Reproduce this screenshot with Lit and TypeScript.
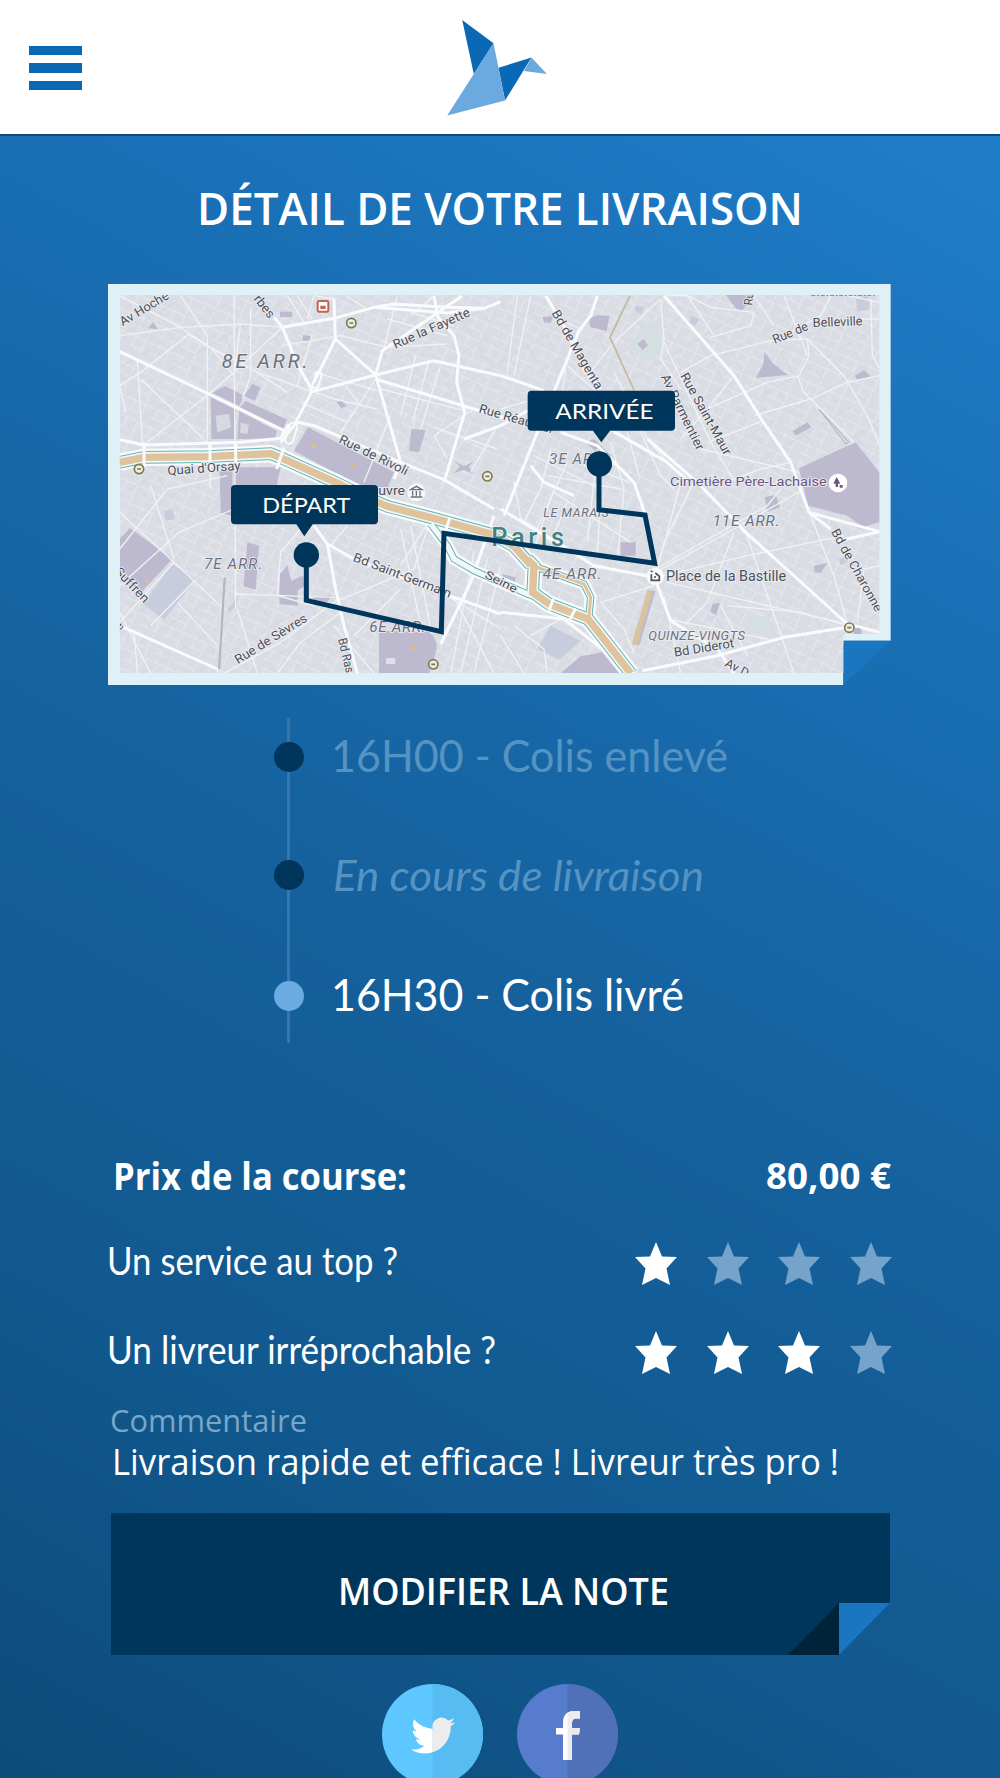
import { html, svg, css, LitElement } from 'lit';
import { customElement, property } from 'lit/decorators.js';

type Label = [text: string, x: number, y: number, angle: number, length: number, size: number, kind?: string];

// Map coordinates are in thirds of a pixel
const PARKS = [
  'M335 352L372 330L430 360L416 390Z',
  'M330 365L405 402L400 490H332Z',
  'M415 405L528 465L524 488L410 490Z',
  'M435 376L560 432L545 462L418 394Z',
  'M622 455L880 590L862 634H782L580 525Z',
  'M455 325L480 335L462 376L430 360Z',
  'M932 460L975 464L955 530L925 525Z',
  'M1058 555L1090 572L1118 558L1104 574L1118 595L1090 582L1060 592L1078 572Z',
  'M400 575H540L528 632H400Z',
  'M357 585H395V722L360 712Z',
  'M57 790L88 757L215 850L122 950L57 895Z',
  'M835 1065L985 1070Q1010 1085 1008 1120L985 1193H835Z',
  'M538 895L560 870L572 915L605 900L620 925L590 945L592 990L536 985Z',
  'M440 800L475 810L465 942L428 932Z',
  'M637 962L694 960L680 978H640Z',
  'M1466 130L1490 118L1526 122L1518 166L1468 154Z',
  'M1326 124L1358 122L1350 142L1330 140Z',
  'M1875 58H1955L1925 106L1905 98Z',
  'M2095 578L2265 500L2337 592V738L2288 755L2240 720L2122 690L2110 640Z',
  'M1992 228L2015 262L2062 298L1966 306L1988 265Z',
  'M2262 300L2290 284L2310 302L2270 312Z',
  'M2076 466L2120 440L2132 455L2085 480Z',
  'M1610 205L1628 190L1642 208L1626 224Z',
  'M1455 500L1480 490L1532 540L1520 560Z',
  'M1560 800H1605V840H1560Z',
  'M1992 665L2025 658L2038 695L2000 708Z',
  'M2140 870L2180 862L2160 892L2142 890Z',
  'M1504 1130L1556 1193H1380L1440 1142Z',
  'M1205 895L1245 905L1240 935L1205 922Z',
  'M1835 985L1858 982L1846 1018L1830 1010Z',
  'M143 158L158 138L170 160Z',
  'M538 108H574V124H538Z',
  'M606 178L634 182L630 200L606 194Z',
  'M708 380L722 374L738 392L722 398Z',
  'M352 1122L362 1120L358 1172L348 1175Z',
];

const PLAZAS = [
  'M215 865L285 912L190 1032L128 985Z',
  'M1350 1050L1440 1095L1376 1152L1310 1120Z',
  'M190 705L215 700L222 730L195 735Z',
  'M2265 70L2300 60L2312 100L2270 108Z',
  'M380 1000L412 965L410 985L386 1012Z',
  'M2215 850L2250 838L2238 860L2218 868Z',
  'M1605 90L1630 95L1622 115L1604 108Z',
  'M1770 120L1796 130L1784 150L1766 142Z',
];

const SQUARES = [
  'M1630 150L1670 130L1685 210L1660 255L1580 215Z',
  'M1950 1025L2010 1020L2000 1085L1945 1070Z',
  'M1180 440L1200 430V480H1185Z',
];

const MAIN_ROADS = [
  'M57 228L325 355L550 465',
  'M57 492L130 508L420 500L540 488L565 445',
  'M520 125L545 155L590 265L635 345L580 450L540 500',
  'M545 155L700 128L820 95L880 85L1040 95L1150 98L1200 78',
  'M820 95L1040 112L1150 98M1000 60L1012 125L1060 180L1075 240L1068 320L1092 410L1030 620',
  'M635 348L825 298L1000 255L1200 300L1330 345',
  'M700 70L704 190L825 298L900 560L880 610',
  'M825 298L845 225L1085 60',
  'M825 310L1120 400L1290 450',
  'M704 190L640 320',
  'M590 440L640 450L900 560L1030 612L1180 700',
  'M640 750L680 805L705 940L730 1050L770 1193',
  'M680 805L760 850L1060 965L1200 1015',
  'M57 1050L350 1180',
  'M1690 60L1900 300L1985 435L2070 560L2125 710L2190 760',
  'M2125 710L2337 768M2215 795L2337 768',
  'M1335 60L1390 150L1455 290L1500 340',
  'M1490 60L1470 120L1435 165L1290 520L1210 720',
  'M1640 490L1790 620L1935 770L2240 1045L2337 1070',
  'M1665 915L1710 1035L1850 1120L1900 1193',
  'M1200 700L1400 820L1480 870L1660 905',
  'M1625 1185L1850 1140L2050 1085L2240 1055',
  'M1200 1010L1390 1030L1530 1140L1600 1193',
  'M1090 490L1200 450L1290 400',
  'M1380 470L1490 510L1600 620L1635 720',
  'M1020 1105L1110 920L1180 720',
  'M1290 570L1330 620L1420 660',
  'M1510 450L1700 560L1760 615',
];

const SIDE_ROADS = [
  'M57 180L240 155L425 145L545 155M240 60L320 180V500M57 60L230 150L330 215L470 290L560 350',
  'M265 175L120 290L57 330M260 175L370 240M325 355L140 500M120 310L310 490M110 255L125 500M57 330L75 410',
  'M330 215L400 300L420 140M450 95V300L425 370M325 355L400 290L545 155',
  'M400 60L405 1000M325 500L330 640M470 290L700 370L830 400',
  'M560 60L610 140M590 60L635 130M640 60L620 130M700 70L640 60',
  'M545 210L720 180L860 215L1040 205M635 175L590 330M640 290L830 345',
  'M735 60L800 100M1000 60L930 120M600 380L740 440M825 310L720 470M735 330L780 390',
  'M945 240L900 420M985 255L935 440M1020 270L960 460M840 340L1090 405',
  'M870 420L790 620M860 130L1040 180M890 60L850 220M930 110L1060 150',
  'M1000 455L1190 520M1120 400L1000 480L1040 550M1190 450L1110 590',
  'M57 710L220 860L370 1000M57 820L200 640L380 600M150 630L220 850M57 930L235 770L400 700',
  'M220 860L57 1040M285 912L150 1050M230 980L350 1110M57 1010L150 1193M100 1060L110 1193',
  'M370 900L350 1193M410 1000L470 1193M400 955L700 965M600 760L540 830L530 960L640 990',
  'M700 980L540 1100L370 1193M720 1010L600 1100L530 1193M700 980L940 880L980 760',
  'M900 760L960 1050M930 750L990 1060M980 745L900 870M760 1080L900 940M700 1050L820 1193M740 750L690 810',
  'M1040 960L1200 1060M1120 830L1050 1193M1160 850L1080 1193M1200 870L1120 1193M1060 965L1180 1193',
  'M1250 60L1220 290M1290 60L1240 300M1355 120L1440 160M1200 400L1340 360M1395 280L1370 460M1400 270L1490 350',
  'M1680 70L1540 200L1460 300M1680 70L1690 190L1680 250L1740 340M1690 200L1760 350L1830 500L1900 615',
  'M1540 290L1640 490L1700 560M1580 380L1680 600L1720 640M1700 60L1760 60L1830 95L1960 110',
  'M1830 185L1950 150L1960 110M1760 60L1840 180M1740 290L1830 240L2010 195L2120 190L2125 240L2095 300L2000 320L1820 400L1740 490',
  'M2120 190L2230 300L2300 420L2337 510M2120 240L2050 60M2190 60L2160 120L2070 170M2240 60L2337 80',
  'M2090 300L2110 350L2260 500M1960 420L2130 370L2240 320L2337 300M1960 60L2020 150M2250 130H2337M2310 70L2315 240L2337 280',
  'M1820 500L1950 450L1985 435M1890 615L1980 580L2070 560M1800 520L2095 590M1820 400L1900 300',
  'M1300 540L1500 640L1490 850M1350 520L1320 640L1270 740M1400 560L1290 800M1340 600L1560 640M1360 650L1590 800',
  'M1450 570L1590 620M1490 520L1460 800M1530 500L1570 640L1550 850M1580 470L1615 600M1780 620L1690 800L1665 900M1740 620L1665 900',
  'M1665 880L2000 690L2040 640M1665 890L1900 760L2110 640M1665 905L1940 840L2230 780M1700 920L2240 1045',
  'M1900 770L1850 900L1820 980L1760 1040M1935 770L1980 900L2080 1193M1660 930L1500 980M2130 720L2200 900L2240 1045',
  'M1690 960L1740 1193M1880 990L2100 1010L2240 1050M1700 1030L2000 1090M1860 990L1940 1140M2337 870L2290 880L2270 1040',
  'M1240 1050L1330 1120L1340 1193M1200 1080L1270 1193M1500 980L1570 1060L1600 1130M1290 1080L1380 1030',
  'M1240 615L1260 730L1440 840M1300 820L1360 640M1400 680L1350 800',
];

const RIVER = [
  'M57 560L130 545L320 543L510 534L545 548L700 618L790 662L860 692L1000 728L1180 778L1240 812L1290 868',
  'M1280 850L1300 870L1296 950L1345 985L1462 1030L1490 1065L1590 1193',
];
const CANALS = [
  'M990 745L1040 810L1060 850L1120 885L1200 920L1280 955L1300 962',
  'M1290 868L1450 925L1470 965L1464 1030',
];

const LABELS: Label[] = [
  ['Av Hoche', 66, 152, -31, 165, 38],
  ['rbes', 458, 70, 52, 76, 38],
  ['8E ARR.', 363, 278, 0, 258, 60, 'area'],
  ['Rue la Fayette', 884, 220, -24, 248, 38],
  ['Rue de Rivoli', 712, 500, 26, 226, 38],
  ["Quai d'Orsay", 201, 598, -4, 220, 38],
  ['Rue Réaumur', 1133, 410, 16, 232, 38],
  ['Bd de Magenta', 1352, 112, 60, 268, 38],
  ['Ru', 1955, 90, -85, 40, 36],
  ['Rue de', 2022, 205, -23, 112, 38],
  ['Belleville', 2136, 154, -2, 150, 38],
  ['Rue Saint-Maur', 1738, 300, 61, 276, 38],
  ['Av Parmentier', 1680, 303, 64, 248, 38],
  ['3E ARR.', 1346, 564, 0, 172, 44, 'area'],
  ['Cimetière Père-Lachaise', 1708, 631, 0, 470, 41, 'poi'],
  ['uvre', 833, 658, 0, 80, 39],
  ['7E ARR.', 310, 879, 0, 175, 45, 'area'],
  ['6E ARR.', 806, 1069, 0, 168, 46, 'area'],
  ['Bd Saint-Germain', 755, 855, 21, 312, 38],
  ['Bd Ras', 712, 1090, 77, 106, 37],
  ['Rue de Sèvres', 412, 1166, -32, 248, 38],
  ['Suffren', 40, 890, 46, 130, 38],
  ['e', 57, 1066, -50, 20, 36],
  ['Seine', 1150, 905, 27, 104, 34],
  ['Paris', 1172, 812, 0, 218, 76, 'city'],
  ['LE MARAIS', 1328, 723, 0, 196, 37, 'area'],
  ['4E ARR.', 1326, 910, 0, 176, 46, 'area'],
  ['11E ARR.', 1836, 752, 0, 200, 46, 'area'],
  ['Place de la Bastille', 1696, 917, 0, 360, 42],
  ['QUINZE-VINGTS', 1643, 1093, 0, 290, 39, 'area'],
  ['Bd Diderot', 1722, 1143, -9, 182, 38],
  ['Av D', 1870, 1170, 28, 76, 37],
  ['Bd de Charonne', 2190, 768, 61, 278, 38],
];

const METROS = [[752, 142], [115, 580], [1160, 602], [998, 1166], [2246, 1056]];

/**
 * One line of text that always takes up the given width
 */
@customElement('fit-text')
export class FitTextElement extends LitElement {
  static styles = css`
    :host {
      display: block;
      flex: none;
    }

    svg {
      display: block;
      overflow: visible;
    }
  `;

  @property({ type: String })
  text = '';

  @property({ type: Number })
  width = 100;

  @property({ type: Number })
  size = 38;

  render() {
    return html`
      <svg width="${this.width}" height="${this.size}">
        <text
          y="${this.size * 0.85}"
          font-size="${this.size}"
          fill="currentColor"
          textLength="${this.width}"
          lengthAdjust="spacingAndGlyphs"
        >${this.text}</text>
      </svg>
    `;
  }
}

@customElement('star-rating')
export class StarRatingElement extends LitElement {
  static styles = css`
    :host {
      display: flex;
      gap: 29.6px;
    }

    svg {
      display: block;
      fill: #75a3ca;
    }

    .on {
      fill: #fff;
    }
  `;

  @property({ type: Number })
  value = 0;

  render() {
    return [1, 2, 3, 4].map(
      (n) => html`
        <svg class="${n <= this.value ? 'on' : ''}" width="42" height="43" viewBox="0 0 42 43">
          <path d="M21 0L27 14.5L42 15L31.5 26.5L35 43L21 36L7 43L10.5 26.5L0 15L15 14.5Z" />
        </svg>
      `
    );
  }
}

@customElement('delivery-map')
export class DeliveryMapElement extends LitElement {
  static styles = css`
    :host {
      display: block;
    }

    svg {
      display: block;
    }

    .park {
      fill: #bdb9cf;
    }

    .plaza {
      fill: #c8cddd;
    }

    .square {
      fill: #d5dfe2;
    }

    .main,
    .side,
    .bank,
    .shore,
    .inner,
    .water,
    .route {
      fill: none;
    }

    .main {
      stroke: #fafbfd;
      stroke-width: 9;
      stroke-linejoin: round;
    }

    .side {
      stroke: #f0f2f6;
      stroke-width: 4;
    }

    .bank {
      stroke: #fafbfd;
      stroke-width: 52;
    }

    .shore {
      stroke: #5fb5b3;
      stroke-width: 38;
    }

    .inner {
      stroke: #f3f5f7;
      stroke-width: 32;
    }

    .water {
      stroke: #dfc39c;
      stroke-width: 22;
    }

    .thin.bank {
      stroke-width: 36;
    }

    .thin.shore {
      stroke-width: 22;
    }

    .thin.inner {
      stroke-width: 16;
    }

    .thin.water {
      stroke-width: 9;
    }

    .label {
      font-family: Roboto, sans-serif;
      fill: #4c4e58;
      stroke: #eceef3;
      stroke-width: 5;
      paint-order: stroke;
    }

    .area {
      fill: #6d707d;
      font-style: italic;
    }

    .poi {
      fill: #6b5482;
    }

    .city {
      fill: #43837f;
      font-weight: 500;
    }

    .route {
      stroke: #00365b;
      stroke-width: 15;
    }

    .pin {
      fill: #00365b;
    }

    .pin-text {
      font-family: Lato, sans-serif;
      font-size: 63px;
      fill: #fff;
    }
  `;

  renderLabel([text, x, y, angle, length, size, kind]: Label) {
    // District names are spaced out, street names are squeezed in
    const adjust = kind === 'area' || kind === 'city' ? 'spacing' : 'spacingAndGlyphs';
    return svg`<text class="label ${kind ?? ''}" font-size="${size}" textLength="${length}"
      lengthAdjust="${adjust}" transform="translate(${x} ${y}) rotate(${angle})">${text}</text>`;
  }

  render() {
    return html`
      <svg width="783" height="401" viewBox="22 25 2349 1203">
        <defs>
          <clipPath id="inner"><path d="M57 57H2337V1075H2228V1193H57Z" /></clipPath>
          <pattern id="blocks" width="76" height="58" patternUnits="userSpaceOnUse" patternTransform="rotate(24)">
            <path d="M0 8H76M0 38H50M18 0V38M52 8V58" stroke="#e6e9ee" stroke-width="3" fill="none" />
          </pattern>
          <pattern id="blocks2" width="64" height="82" patternUnits="userSpaceOnUse" patternTransform="rotate(-31)">
            <path d="M0 20H64M30 20V82" stroke="#d1d4dc" stroke-width="2" fill="none" />
          </pattern>
        </defs>
        <path d="M22 25H2370V1095H2228V1228H22Z" fill="#dff1f6" />
        <path d="M2228 1095H2370L2228 1228Z" fill="#1b76c0" />
        <g clip-path="url(#inner)">
          <rect x="57" y="57" width="2280" height="1136" fill="#dadde4" />
          <rect x="57" y="57" width="2280" height="1136" fill="url(#blocks)" />
          <rect x="57" y="57" width="2280" height="1136" fill="url(#blocks2)" />
          ${SQUARES.map((d) => svg`<path class="square" d="${d}" />`)}
          ${PLAZAS.map((d) => svg`<path class="plaza" d="${d}" />`)}
          ${PARKS.map((d) => svg`<path class="park" d="${d}" />`)}
          <path d="M345 420L385 415L392 455L350 470Z" fill="#d6d9e2" />
          <path d="M420 440L445 448L440 475L418 472Z" fill="#d6d9e2" />
          <rect x="856" y="1147" width="28" height="18" fill="#dde0ea" />
          ${SIDE_ROADS.map((d) => svg`<path class="side" d="${d}" />`)}
          ${MAIN_ROADS.map((d) => svg`<path class="main" d="${d}" />`)}
          <path d="M1588 60L1528 185L1612 370L1640 440" fill="none" stroke="#c3b79f" stroke-width="5" />
          <path d="M372 905L355 1180" fill="none" stroke="#b7b4c4" stroke-width="7" />
          <path d="M2155 400L2245 500L2235 505Z" fill="#d5d8da" stroke="#aeb3b5" stroke-width="3" />
          ${CANALS.map((d) => svg`<path class="bank thin" d="${d}" />`)}
          ${RIVER.map((d) => svg`<path class="bank" d="${d}" />`)}
          ${CANALS.map((d) => svg`<path class="shore thin" d="${d}" />`)}
          ${RIVER.map((d) => svg`<path class="shore" d="${d}" />`)}
          ${CANALS.map((d) => svg`<path class="inner thin" d="${d}" />`)}
          ${RIVER.map((d) => svg`<path class="inner" d="${d}" />`)}
          ${RIVER.map((d) => svg`<path class="water" d="${d}" />`)}
          <path class="water thin" d="${CANALS[1]}" />
          <path class="main" d="M130 500V575M328 500V575M405 500V575M550 515L528 580M1048 725L1035 765M1358 970L1345 1005M1425 998L1408 1030" />
          <path d="M1650 945L1602 1108" stroke="#d8c39f" stroke-width="19" />
          <path d="M1661 945L1613 1108" stroke="#c0bacd" stroke-width="7" />
          <g fill="none" stroke="#fafbfd" stroke-width="6">
            <rect x="560" y="440" width="24" height="65" rx="12" transform="rotate(18 572 472)" />
            <rect x="640" y="288" width="18" height="50" rx="8" transform="rotate(18 649 313)" />
          </g>
          <g fill="#dcbf86">
            <circle cx="641" cy="511" r="7" />
            <circle cx="757" cy="567" r="6" />
            <circle cx="937" cy="1118" r="7" />
            <circle cx="140" cy="915" r="6" />
          </g>
          <rect x="651" y="76" width="32" height="32" rx="4" fill="#fff" stroke="#c4654e" stroke-width="6" />
          <path d="M659 90H675V100H659Z" fill="#c4654e" />
          ${METROS.map(
            ([x, y]) => svg`
              <circle cx="${x}" cy="${y}" r="14" fill="#efeee2" stroke="#7d7a52" stroke-width="5" />
              <path d="M${x - 6} ${y}H${x + 6}" stroke="#7d7a52" stroke-width="5" />`
          )}
          <circle cx="947" cy="650" r="27" fill="#f7f8fa" />
          <path d="M930 642L947 632L964 642ZM936 646V660M947 646V660M958 646V660M930 664H965" fill="none" stroke="#6a6d77" stroke-width="4" />
          <circle cx="2212" cy="622" r="28" fill="#fff" />
          <path d="M2208 604L2198 624H2205V634H2212V624H2219ZM2217 628H2226V636H2217Z" fill="#6b5482" />
          <circle cx="1664" cy="902" r="26" fill="#fafbfd" />
          <path d="M1652 896V914H1676V902L1664 892M1650 886L1656 888M1660 904H1666" fill="none" stroke="#4c4e58" stroke-width="5" />
          <circle cx="2271" cy="1068" r="12" fill="#b9b8c6" />
          <path d="M2132 59H2322" stroke="#8d909b" stroke-width="4" stroke-dasharray="12 5 6 5" />
          ${LABELS.map((label) => this.renderLabel(label))}
        </g>
        <path class="route" d="M617 838V974L1022 1068L1030 773L1662 863L1633 718L1495 702V565" />
        <circle class="pin" cx="617" cy="838" r="38" />
        <circle class="pin" cx="1496" cy="565" r="38" />
        <path class="pin" d="M403 628H820Q832 628 832 640V734Q832 746 820 746H636L611 782L587 746H403Q391 746 391 734V640Q391 628 403 628Z" />
        <path class="pin" d="M1293 345H1711Q1723 345 1723 357V453Q1723 465 1711 465H1528L1502 500L1477 465H1293Q1281 465 1281 453V357Q1281 345 1293 345Z" />
        <text class="pin-text" x="485" y="713" textLength="264" lengthAdjust="spacingAndGlyphs">DÉPART</text>
        <text class="pin-text" x="1364" y="431" textLength="295" lengthAdjust="spacingAndGlyphs">ARRIVÉE</text>
      </svg>
    `;
  }
}

@customElement('app-root')
export class AppRootElement extends LitElement {
  static styles = css`
    :host {
      display: flex;
      flex-direction: column;
      box-sizing: border-box;
      width: 1000px;
      height: 1778px;
      overflow: hidden;
      color: #fff;
      font-family: Lato, sans-serif;
      background: linear-gradient(209deg, #1f7dc8 7%, #1a70b6 27%, #15629f 52%, #11588e 78%, #0d4b79 100%);
    }

    header {
      display: grid;
      grid-template-columns: 1fr auto 1fr;
      align-items: center;
      flex: none;
      box-sizing: border-box;
      height: 136px;
      padding: 0 29px;
      background: #fff;
      border-bottom: 2px solid #0d4a80;
    }

    .menu {
      display: flex;
      flex-direction: column;
      gap: 8px;
      padding: 2px 0 0;
      border: 0;
      background: none;
      width: 53px;
    }

    .menu span {
      height: 9.5px;
      background: #0a69b5;
    }

    .bird {
      display: block;
      margin: 1px 0 0 -7px;
    }

    h1,
    .button {
      font-family: 'Open Sans', 'Noto Sans', sans-serif;
      font-weight: 600;
    }

    h1 {
      display: flex;
      justify-content: center;
      margin: 50px 0 52px;
    }

    delivery-map {
      margin-left: 107.6px;
    }

    .timeline {
      display: grid;
      grid-template-rows: 118px 121px 86px;
      margin: 33px 0 0 274px;
      padding: 0;
      list-style: none;
      height: 325px;
      background: linear-gradient(#3477af, #3477af) 13px 0 / 3px 100% no-repeat;
    }

    .timeline li {
      display: flex;
      gap: 27px;
      margin-top: 17px;
      color: #5593c3;
    }

    .timeline .current {
      color: #fff;
    }

    .dot {
      width: 30px;
      height: 30px;
      margin-top: 7px;
      border-radius: 50%;
      background: #00365b;
    }

    .current .dot {
      background: #6aabe2;
    }

    .italic {
      margin: 1px 0 0 2px;
      font-style: italic;
    }

    .details {
      display: flex;
      flex-direction: column;
      margin: 115px 108px 0 107px;
    }

    .row {
      display: flex;
      justify-content: space-between;
      height: 43px;
      margin-top: 46.6px;
    }

    .row.price {
      height: 38px;
      margin: 0 1px -1px 6px;
      font-family: 'Open Sans', 'Noto Sans', sans-serif;
      font-weight: 700;
    }

    .comment {
      margin: 32px 0 0 3px;
      font-family: 'Open Sans', 'Noto Sans', sans-serif;
    }

    .comment fit-text + fit-text {
      margin: 7px 0 0 2px;
    }

    .muted {
      color: #79a6c9;
    }

    .button {
      display: flex;
      justify-content: center;
      position: relative;
      box-sizing: border-box;
      width: 779px;
      height: 142px;
      margin: 32px 0 0 4px;
      padding: 60px 0 0 6px;
      border: 0;
      color: #fff;
      background: #00365b;
      clip-path: polygon(0 0, 100% 0, 100% 90px, 728px 100%, 0 100%);
    }

    .fold {
      position: absolute;
      right: 0;
      bottom: 0;
    }

    .social {
      display: flex;
      justify-content: center;
      gap: 34px;
      margin: 29px 1px 0 0;
    }

    .social svg {
      display: block;
    }
  `;

  render() {
    return html`
      <header>
        <button class="menu" aria-label="Menu"><span></span><span></span><span></span></button>
        <svg class="bird" width="100" height="96" viewBox="447.5 19 100 96">
          <path d="M462.7 19L494 42.3L474.3 73Z M499 66.7L532 56.5L505.5 99.5Z" fill="#0a69b5" />
          <path d="M494 42.3L499 66.7L505.5 99.5L447.7 114.5L474.3 73Z M532 56.5L547.5 73L524.5 70Z" fill="#6aaade" />
        </svg>
      </header>

      <h1><fit-text text="DÉTAIL DE VOTRE LIVRAISON" width="606" size="46"></fit-text></h1>

      <delivery-map></delivery-map>

      <ul class="timeline">
        <li><span class="dot"></span><fit-text text="16H00 - Colis enlevé" width="397" size="44"></fit-text></li>
        <li>
          <span class="dot"></span><fit-text class="italic" text="En cours de livraison" width="371" size="43"></fit-text>
        </li>
        <li class="current">
          <span class="dot"></span><fit-text text="16H30 - Colis livré" width="353" size="44"></fit-text>
        </li>
      </ul>

      <section class="details">
        <div class="row price">
          <fit-text text="Prix de la course:" width="294" size="38"></fit-text>
          <fit-text text="80,00 €" width="125" size="36"></fit-text>
        </div>
        <div class="row">
          <fit-text text="Un service au top ?" width="291" size="39"></fit-text>
          <star-rating value="1"></star-rating>
        </div>
        <div class="row">
          <fit-text text="Un livreur irréprochable ?" width="389" size="39"></fit-text>
          <star-rating value="3"></star-rating>
        </div>
        <div class="comment">
          <fit-text class="muted" text="Commentaire" width="197" size="31"></fit-text>
          <fit-text text="Livraison rapide et efficace ! Livreur très pro !" width="727" size="37"></fit-text>
        </div>
        <button class="button">
          <fit-text text="MODIFIER LA NOTE" width="331" size="38"></fit-text>
          <svg class="fold" width="102" height="52" viewBox="0 0 102 52">
            <path d="M51 0V52H0Z" fill="#002339" />
            <path d="M51 0H102V52H51Z" fill="#1b76c1" />
          </svg>
        </button>
      </section>

      <div class="social">
        <svg width="101" height="101" viewBox="0 0 101 101">
          <defs>
            <linearGradient id="bird-split" gradientUnits="userSpaceOnUse" x1="0" y1="0" x2="24" y2="0">
              <stop offset="0.486" stop-color="#fff" />
              <stop offset="0.486" stop-color="#ececee" />
            </linearGradient>
          </defs>
          <circle cx="50.5" cy="50.5" r="50.5" fill="#5fc7ff" />
          <path d="M50.5 0A50.5 50.5 0 0 1 50.5 101Z" fill="#57bcf2" />
          <path
            transform="translate(29 29.5) scale(1.84)"
            fill="url(#bird-split)"
            d="M24 4.56c-.88.39-1.83.65-2.83.77 1.02-.61 1.8-1.57 2.16-2.72-.95.56-2 .97-3.12 1.19a4.92 4.92 0 0 0-8.38 4.48C7.73 8.09 4.1 6.12 1.67 3.15a4.92 4.92 0 0 0 1.52 6.57c-.81-.03-1.57-.25-2.23-.62v.06a4.92 4.92 0 0 0 3.95 4.83c-.69.19-1.43.23-2.22.09a4.92 4.92 0 0 0 4.6 3.42A9.87 9.87 0 0 1 0 19.54a13.94 13.94 0 0 0 7.55 2.21c9.14 0 14.31-7.72 13.99-14.64.96-.7 1.8-1.56 2.46-2.55z"
          />
        </svg>
        <svg width="101" height="101" viewBox="0 0 101 101">
          <circle cx="50.5" cy="50.5" r="50.5" fill="#577bcd" />
          <path d="M50.5 0A50.5 50.5 0 0 1 50.5 101Z" fill="#5070b7" />
          <path d="M46 76V50.500H39V44H46V39Q46 27 57 27H63V34.500H59Q55 34.500 55 39V44H63L62 50.500H55V76Z" fill="#fff" />
          <path d="M50.500 76V29Q53 27 57 27H63V34.500H59Q55 34.500 55 39V44H63L62 50.500H55V76Z" fill="#ececee" />
        </svg>
      </div>
    `;
  }
}

declare global {
  interface HTMLElementTagNameMap {
    'app-root': AppRootElement;
    'delivery-map': DeliveryMapElement;
    'fit-text': FitTextElement;
    'star-rating': StarRatingElement;
  }
}
